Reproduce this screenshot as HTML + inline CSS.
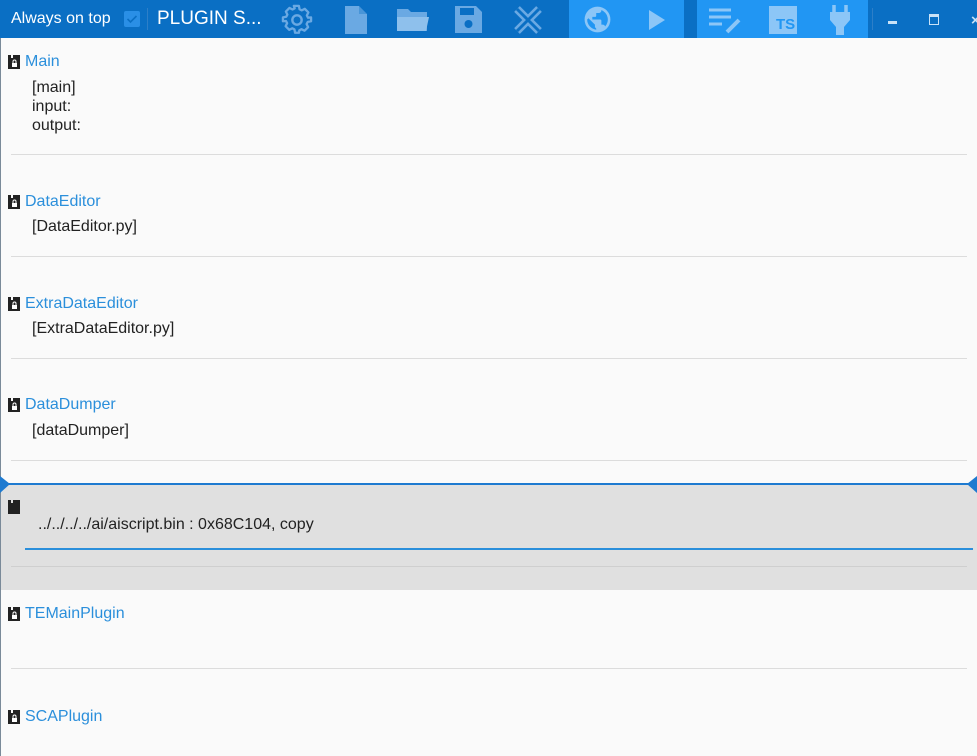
<!DOCTYPE html>
<html><head><style>
body{margin:0;width:977px;height:756px;overflow:hidden;background:#fafafa;font-family:"Liberation Sans",sans-serif;position:relative}
.bar{position:absolute;left:0;top:0;width:977px;height:38px;background:#0a6fc4}
.abs{position:absolute}
.t{position:absolute;left:25px;color:#2b8fdb;font-size:16px}
.b{position:absolute;left:32px;color:#222;font-size:16px;line-height:19px}
.sep{position:absolute;left:11px;right:10px;height:1px;background:#dcdcdc}
.ic{position:absolute;left:8px;width:13px;height:15px}
</style></head><body>
<div class="bar"></div>
<div class="abs" style="left:11px;top:10px;color:#fff;font-size:16px">Always on top</div>
<div class="abs" style="left:124px;top:11px;width:16px;height:16px;background:#2a8fe6;border-radius:2px"><svg width="16" height="16"><path d="M3.5 8l3 3 6-6" stroke="#0a6fc4" stroke-width="1.6" fill="none"/></svg></div>
<div class="abs" style="left:147px;top:8px;width:1px;height:22px;background:#2d7fc8"></div>
<div class="abs" style="left:157px;top:8px;color:#fff;font-size:19px">PLUGIN S...</div>
<svg class="abs" style="left:281px;top:4px" width="32" height="32" viewBox="0 0 24 24"><path fill="none" stroke="#6aa9e3" stroke-width="1.8" stroke-linejoin="round" d="M10 2h4l.5 2.6 1.7.9 2.4-1.2 2.8 2.8-1.2 2.4.9 1.7L23.5 11v3l-2.6.5-.9 1.7 1.2 2.4-2.8 2.8-2.4-1.2-1.7.9L14 23h-3l-.5-2.6-1.7-.9-2.4 1.2-2.8-2.8 1.2-2.4-.9-1.7L1.5 14v-3l2.6-.5.9-1.7-1.2-2.4 2.8-2.8 2.4 1.2 1.7-.9z" transform="translate(0,-.5) scale(.96)"/><circle cx="12" cy="12" r="3.5" fill="none" stroke="#6aa9e3" stroke-width="1.8"/></svg>
<svg class="abs" style="left:343px;top:4px" width="26" height="32"><path d="M2 2h14l8 8v20H2z" fill="#6aa9e3"/><path d="M16 2v8h8" fill="#0a6fc4" opacity=".35"/></svg>
<svg class="abs" style="left:396px;top:7px" width="34" height="26"><path d="M1 2h11l3 3h16v19H1z" fill="#6aa9e3"/><path d="M1 10h32l-3 14H1z" fill="#8ec0ec"/></svg>
<svg class="abs" style="left:454px;top:5px" width="29" height="29"><path d="M1 1h21l6 6v21H1z" fill="#6aa9e3"/><rect x="6" y="3" width="14" height="7" fill="#0a6fc4"/><circle cx="14.5" cy="19" r="4" fill="#0a6fc4"/></svg>
<svg class="abs" style="left:513px;top:5px" width="30" height="30" viewBox="0 0 30 30"><path d="M4 4l22 22M26 4L4 26" stroke="#6aa9e3" stroke-width="8"/><path d="M4 4l22 22M26 4L4 26" stroke="#0a6fc4" stroke-width="3"/></svg>
<div class="abs" style="left:569px;top:0;width:115px;height:38px;background:#2196f3"></div>
<div class="abs" style="left:697px;top:0;width:171px;height:38px;background:#2196f3"></div>
<svg class="abs" style="left:582px;top:4px" width="31" height="31" viewBox="0 0 24 24"><path fill="#8cc6f7" d="M12 2a10 10 0 1 0 0 20 10 10 0 0 0 0-20zm-1 17.9A8 8 0 0 1 4 12l1-1 5 5v1a2 2 0 0 0 1 2zm6.9-2.5A2 2 0 0 0 16 16h-1v-3a1 1 0 0 0-1-1H8v-2h2a1 1 0 0 0 1-1V7h2a2 2 0 0 0 2-2v-.4a8 8 0 0 1 2.9 12.8z"/></svg>
<svg class="abs" style="left:648px;top:10px" width="18" height="20"><path d="M1 0l16 10-16 10z" fill="#8cc6f7"/></svg>
<svg class="abs" style="left:709px;top:8px" width="34" height="26"><path d="M0 2h22M0 9h22M0 16h13" stroke="#8cc6f7" stroke-width="3"/><path d="M18 24l12-12" stroke="#8cc6f7" stroke-width="4"/></svg>
<div class="abs" style="left:769px;top:6px;width:28px;height:28px;background:#8cc6f7;color:#2196f3;font-weight:bold;font-size:15px"><span style="position:absolute;left:7px;top:10px">TS</span></div>
<svg class="abs" style="left:830px;top:5px" width="20" height="30"><path d="M4 0v7M16 0v7" stroke="#8cc6f7" stroke-width="3.5"/><path d="M0 7h20v8l-6 7v8H6v-8l-6-7z" fill="#8cc6f7"/></svg>
<div class="abs" style="left:872px;top:8px;width:1px;height:22px;background:#2d7fc8"></div>
<div class="abs" style="left:888px;top:21px;width:9px;height:3px;background:#c9e2f7"></div>
<div class="abs" style="left:929px;top:14px;width:8px;height:7px;border:1.5px solid #c9e2f7;border-top-width:3px"></div>
<div class="abs" style="left:971px;top:12px;color:#c9e2f7;font-size:15px;font-weight:bold">×</div>
<div class="abs" style="left:0;top:38px;width:1px;height:718px;background:#7a8a99"></div>

<svg width="0" height="0" style="position:absolute"><defs><symbol id="k" viewBox="0 0 13 15"><path d="M0 1h3v3h2V1h7v14H0z" fill="#222"/><rect x="4" y="9" width="5" height="4" fill="#fff"/><path d="M5 9V7.5a1.5 1.5 0 0 1 3 0V9" stroke="#fff" fill="none"/></symbol></defs></svg>

<svg class="ic" style="top:54px"><use href="#k"/></svg><div class="t" style="top:53px">Main</div>
<div class="b" style="top:78px">[main]<br>input:<br>output:</div>
<div class="sep" style="top:154px"></div>
<svg class="ic" style="top:194px"><use href="#k"/></svg><div class="t" style="top:193px">DataEditor</div>
<div class="b" style="top:217px">[DataEditor.py]</div>
<div class="sep" style="top:256px"></div>
<svg class="ic" style="top:296px"><use href="#k"/></svg><div class="t" style="top:295px">ExtraDataEditor</div>
<div class="b" style="top:319px">[ExtraDataEditor.py]</div>
<div class="sep" style="top:358px"></div>
<svg class="ic" style="top:397px"><use href="#k"/></svg><div class="t" style="top:396px">DataDumper</div>
<div class="b" style="top:421px">[dataDumper]</div>
<div class="sep" style="top:460px"></div>

<div class="abs" style="left:1px;top:484px;width:976px;height:106px;background:#e0e0e0"></div>
<div class="abs" style="left:0;top:483px;width:977px;height:2px;background:#1e7ad0"></div>
<svg class="abs" style="left:0;top:476px" width="10" height="18"><path d="M0 0l10 8-10 9z" fill="#1e7ad0"/></svg>
<svg class="abs" style="left:967px;top:476px" width="10" height="18"><path d="M10 0L0 8l10 9z" fill="#1e7ad0"/></svg>
<svg class="abs" style="left:8px;top:499px" width="13" height="15" viewBox="0 0 13 15"><path d="M0 1h3v3h2V1h7v14H0z" fill="#222"/></svg>
<div class="abs" style="left:38px;top:516px;color:#222;font-size:16px">../../../../ai/aiscript.bin : 0x68C104, copy</div>
<div class="abs" style="left:25px;top:548px;width:948px;height:2px;background:#2b8fdb"></div>
<div class="sep" style="top:566px;background:#cfcfcf"></div>

<svg class="ic" style="top:606px"><use href="#k"/></svg><div class="t" style="top:605px">TEMainPlugin</div>
<div class="sep" style="top:668px"></div>
<svg class="ic" style="top:709px"><use href="#k"/></svg><div class="t" style="top:708px">SCAPlugin</div>
</body></html>
